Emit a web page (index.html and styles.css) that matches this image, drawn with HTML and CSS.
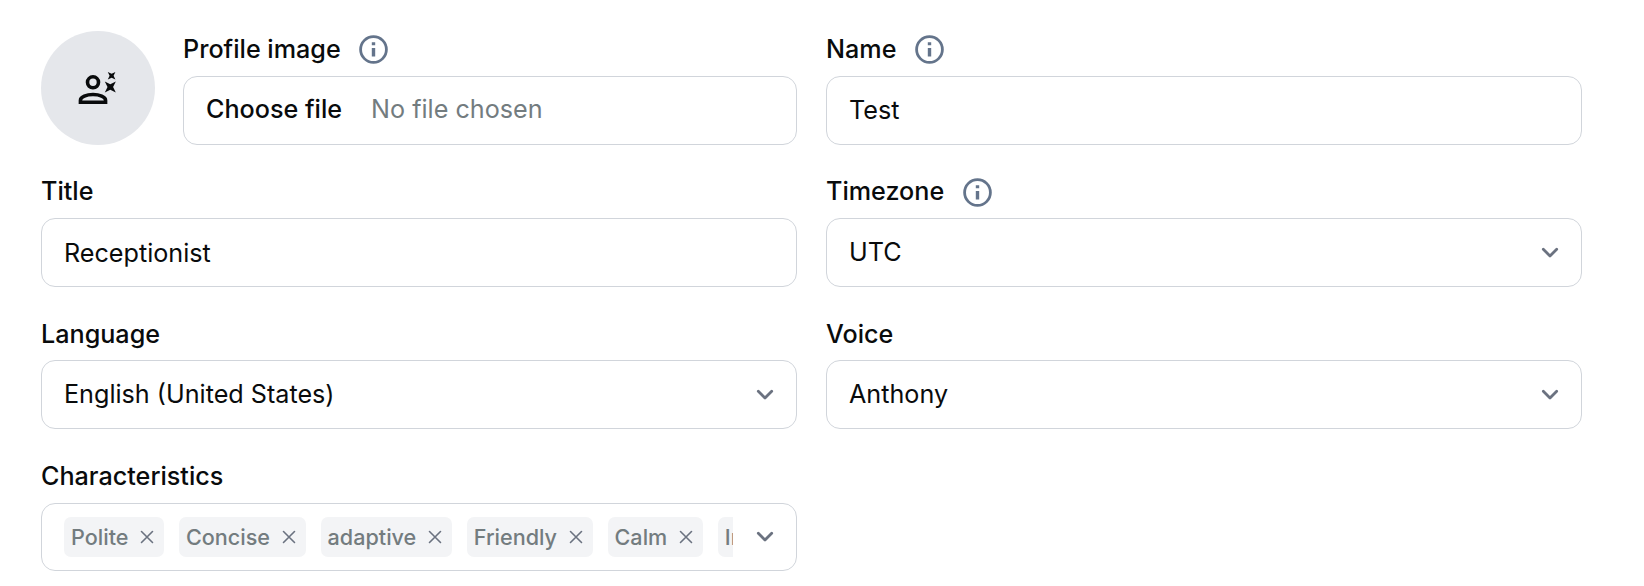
FILE: index.html
```html
<!DOCTYPE html>
<html lang="en">
<head>
<meta charset="utf-8">
<title>Agent profile</title>
<link rel="stylesheet" href="styles.css">
</head>
<body>
<svg class="defs" width="0" height="0" aria-hidden="true">
  <symbol id="info" viewBox="0 0 29 29">
    <circle cx="14.5" cy="14.5" r="12.9" fill="none" stroke="currentColor" stroke-width="2.8"/>
    <path d="M12.800 7.300h3.400v3h-3.400zM12.800 13h3.400v8.600h-3.400z" fill="currentColor"/>
  </symbol>
  <symbol id="chevron" viewBox="0 0 18 12">
    <path d="M2.3 2.3 9 9l6.7-6.7" fill="none" stroke="currentColor" stroke-width="2.8" stroke-linecap="round" stroke-linejoin="round"/>
  </symbol>
  <symbol id="close" viewBox="0 0 14 14">
    <path d="M1.5 1.5l11 11M12.5 1.5l-11 11" fill="none" stroke="currentColor" stroke-width="1.6" stroke-linecap="round"/>
  </symbol>
</svg>
<form class="form">
  <div class="profile">
    <div class="avatar">
      <svg class="avatar-icon" viewBox="0 0 40 36">
        <circle cx="15" cy="12.3" r="5.5" fill="none" stroke="currentColor" stroke-width="3.6"/>
        <path d="M2.4 32.2v-1.8c0-3.5 6.2-5.9 12.6-5.9s12.600 2.400 12.600 5.900v1.800z" fill="none" stroke="currentColor" stroke-width="3.5"/>
        <path d="M26.8 11.5l5.5 2.7 5.5-2.700-2.700 5.500 2.700 5.500-5.500-2.700-5.500 2.700 2.700-5.500zM29.800 2l3.800 1.800L37.400 2l-1.800 3.800 1.800 3.800-3.800-1.800-3.800 1.800 1.800-3.800z" fill="currentColor"/>
      </svg>
    </div>
    <div class="field">
      <div class="label">Profile image<svg class="info"><use href="#info"/></svg></div>
      <div class="control file"><span class="choose">Choose file</span><span class="none">No file chosen</span></div>
    </div>
  </div>
  <div class="field">
    <div class="label">Name<svg class="info"><use href="#info"/></svg></div>
    <div class="control"><span class="value">Test</span></div>
  </div>
  <div class="field">
    <div class="label">Title</div>
    <div class="control text">Receptionist</div>
  </div>
  <div class="field">
    <div class="label">Timezone<svg class="info"><use href="#info"/></svg></div>
    <div class="control select"><span class="value">UTC</span><svg class="chevron"><use href="#chevron"/></svg></div>
  </div>
  <div class="field">
    <div class="label low">Language</div>
    <div class="control select"><span class="value">English (United States)</span><svg class="chevron"><use href="#chevron"/></svg></div>
  </div>
  <div class="field">
    <div class="label low">Voice</div>
    <div class="control select"><span class="value">Anthony</span><svg class="chevron"><use href="#chevron"/></svg></div>
  </div>
  <div class="field">
    <div class="label">Characteristics</div>
    <div class="control select multi">
      <div class="chips">
        <span class="chip">Polite<svg class="close"><use href="#close"/></svg></span>
        <span class="chip">Concise<svg class="close"><use href="#close"/></svg></span>
        <span class="chip">adaptive<svg class="close"><use href="#close"/></svg></span>
        <span class="chip">Friendly<svg class="close"><use href="#close"/></svg></span>
        <span class="chip">Calm<svg class="close"><use href="#close"/></svg></span>
        <span class="chip">In</span>
      </div>
      <svg class="chevron"><use href="#chevron"/></svg>
    </div>
  </div>
</form>
</body>
</html>
```
FILE: styles.css
```css
* { box-sizing: border-box; }
body {
  margin: 0;
  background: #fff;
  color: #090b0c;
  font-family: Inter, "Liberation Sans", sans-serif;
  font-size: 25.16px;
  font-weight: 420;
  line-height: 36px;
  overflow: hidden;
}
svg { display: block; flex: none; }
.defs { position: absolute; }
.form {
  display: grid;
  grid-template-columns: 756px 756px;
  column-gap: 29px;
  row-gap: 28.2px;
  padding: 31px 0 0 41px;
}
.profile { display: flex; gap: 28px; }
.profile .field { flex: 1; }
.avatar {
  width: 114px;
  height: 114px;
  border-radius: 50%;
  background: #e5e7eb;
  display: flex;
  align-items: center;
  justify-content: center;
}
.avatar-icon { width: 40px; height: 36px; }
.label {
  display: flex;
  align-items: flex-start;
  gap: 18.5px;
  height: 45px;
  font-weight: 535;
}
.low { padding-top: 0.6px; }
.info { width: 29px; height: 29px; margin-top: 4.4px; color: #64748b; }
.control {
  display: flex;
  align-items: center;
  height: 69px;
  padding: 0 22px;
  border: 1px solid #d1d5db;
  border-radius: 14px;
}
.text { padding-top: 1px; }
.file { gap: 29px; padding-bottom: 3px; }
.choose { font-weight: 535; }
.none { color: #737c7f; }
.select { justify-content: space-between; }
.value { padding-bottom: 1.6px; }
.chevron { width: 18px; height: 12px; color: #6b7280; }
.multi { height: 68px; }
.chips { display: flex; gap: 14.5px; width: 669px; overflow: hidden; }
.chip {
  display: flex;
  flex: none;
  align-items: center;
  gap: 11.5px;
  height: 40px;
  padding: 0 10.5px 0 7px;
  border-radius: 7px;
  background: #f3f4f6;
  color: #737c7f;
  font-size: 21.6px;
  font-weight: 535;
}
.close { width: 14px; height: 14px; color: #6b7280; }
```
